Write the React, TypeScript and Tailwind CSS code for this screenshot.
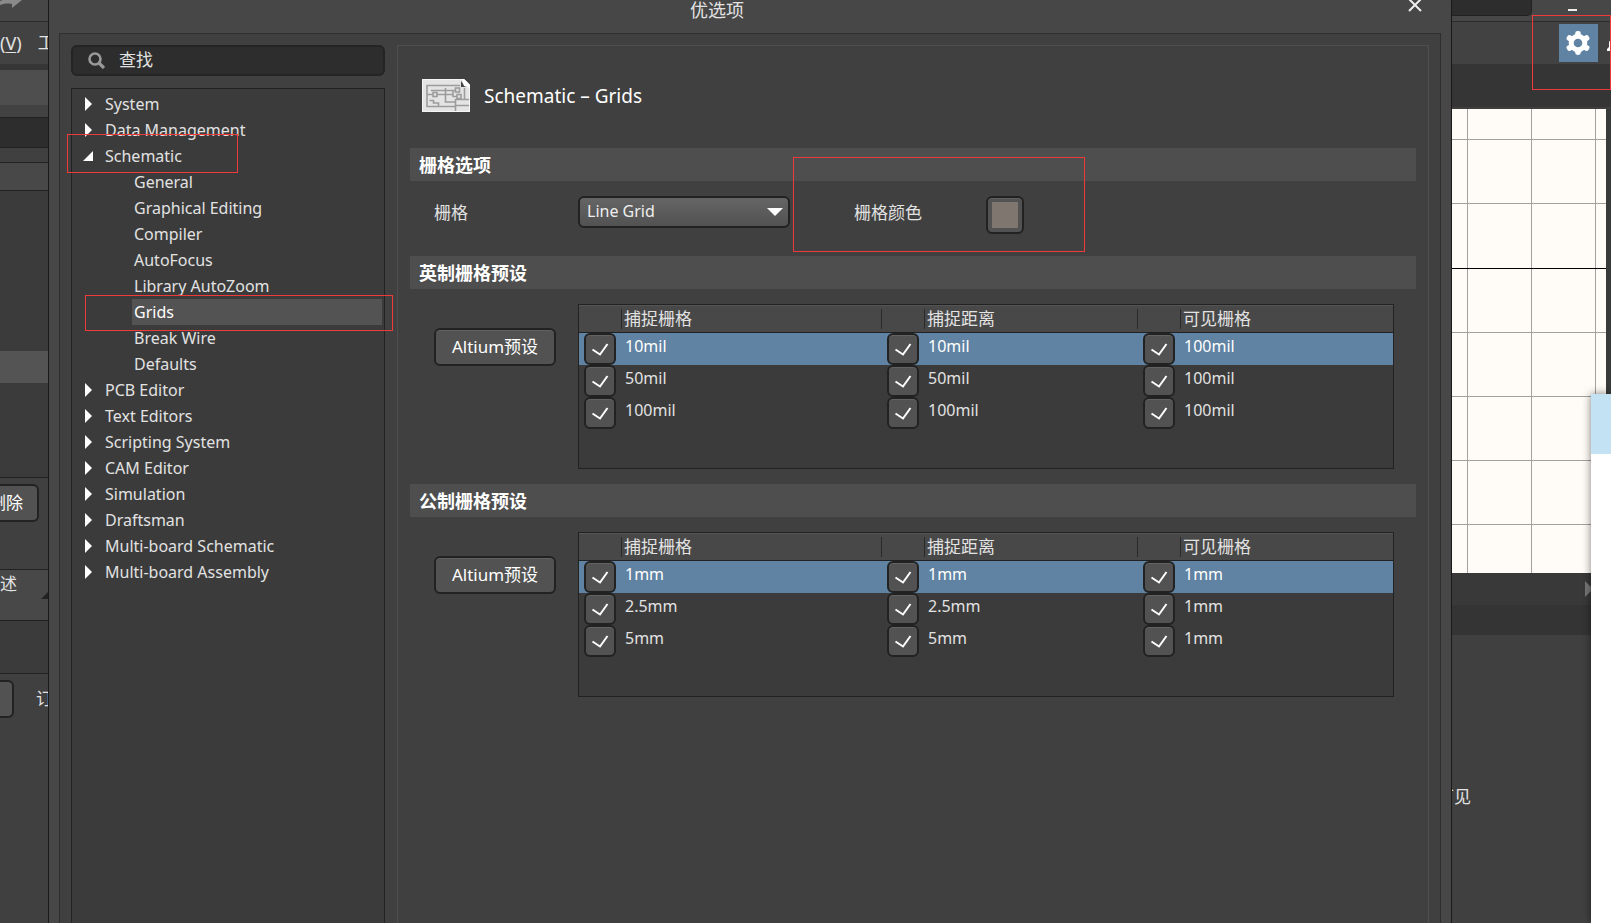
import type { ReactNode } from "react";

type TreeItem = { label: string; level: 0 | 1; open?: boolean; active?: boolean };

const tree: TreeItem[] = [
  { label: "System", level: 0 },
  { label: "Data Management", level: 0 },
  { label: "Schematic", level: 0, open: true },
  { label: "General", level: 1 },
  { label: "Graphical Editing", level: 1 },
  { label: "Compiler", level: 1 },
  { label: "AutoFocus", level: 1 },
  { label: "Library AutoZoom", level: 1 },
  { label: "Grids", level: 1, active: true },
  { label: "Break Wire", level: 1 },
  { label: "Defaults", level: 1 },
  { label: "PCB Editor", level: 0 },
  { label: "Text Editors", level: 0 },
  { label: "Scripting System", level: 0 },
  { label: "CAM Editor", level: 0 },
  { label: "Simulation", level: 0 },
  { label: "Draftsman", level: 0 },
  { label: "Multi-board Schematic", level: 0 },
  { label: "Multi-board Assembly", level: 0 },
];

const headers = ["捕捉栅格", "捕捉距离", "可见栅格"];
const imperial = [
  ["10mil", "10mil", "100mil"],
  ["50mil", "50mil", "100mil"],
  ["100mil", "100mil", "100mil"],
];
const metric = [
  ["1mm", "1mm", "1mm"],
  ["2.5mm", "2.5mm", "1mm"],
  ["5mm", "5mm", "1mm"],
];

function TreeRow({ item }: { item: TreeItem }) {
  if (item.level === 1) {
    return (
      <li className="flex h-[26px] pr-[2px] pl-[60px]">
        <button
          className={
            item.active
              ? "flex flex-1 items-center bg-[#535353] pl-[2px] text-left text-white"
              : "flex flex-1 items-center pl-[2px] text-left"
          }
        >
          {item.label}
        </button>
      </li>
    );
  }
  return (
    <li className="flex h-[26px]">
      <button className="flex flex-1 items-center pl-[11px] text-left" aria-expanded={!!item.open}>
        <svg className="mr-[11px] h-[14px] w-[11px]" viewBox="0 0 11 14" fill="#fff" aria-hidden="true">
          {item.open ? <path d="M0 12H10V2Z" /> : <path d="M2 0L9 7L2 14Z" />}
        </svg>
        {item.label}
      </button>
    </li>
  );
}

function SectionTitle({ children }: { children: ReactNode }) {
  return (
    <h2 className="flex h-[33px] items-center bg-[#4e4e4e] pl-[9px] text-[18px] font-bold text-white">{children}</h2>
  );
}

function Check({ label }: { label: string }) {
  return (
    <span className="relative block h-8 w-8">
      <input
        type="checkbox"
        defaultChecked
        aria-label={label}
        className="peer block h-8 w-8 appearance-none rounded-[6px] border-2 border-[#222] bg-[#525252] shadow-[inset_0_1px_0_#636363]"
      />
      <svg
        className="pointer-events-none invisible absolute inset-0 h-8 w-8 peer-checked:visible"
        viewBox="0 0 32 32"
        aria-hidden="true"
      >
        <path d="M8.500 16.500L16 21.500L23.500 11" fill="none" stroke="#fff" strokeWidth="2" />
      </svg>
    </span>
  );
}

function PresetTable({ rows }: { rows: string[][] }) {
  return (
    <div className="h-[165px] min-w-0 flex-1 border border-[#222] bg-[#3b3b3b]">
      <table className="w-full table-fixed border-separate border-spacing-0">
        <colgroup>
          <col className="w-[43px]" />
          <col className="w-[260px]" />
          <col className="w-[43px]" />
          <col className="w-[213px]" />
          <col className="w-[43px]" />
          <col />
        </colgroup>
        <thead>
          <tr className="h-7 bg-[#484848]">
            {headers.map((h, i) => [
              <td key={h + "c"} className="border-t border-b border-t-[#555] border-b-[#222] p-0">
                <div className="h-5 border-r border-[#2a2a2a]" />
              </td>,
              <th key={h} scope="col" className="border-t border-b border-t-[#555] border-b-[#222] p-0 text-left font-normal">
                <div
                  className={
                    i < 2 ? "flex h-5 items-center border-r border-[#2a2a2a] pl-[2px]" : "flex h-5 items-center pl-[2px]"
                  }
                >
                  {h}
                </div>
              </th>,
            ])}
          </tr>
        </thead>
        <tbody className="text-[16px]">
          {rows.map((row, r) => (
            <tr key={r} className={r === 0 ? "h-8 bg-[#6083a3] text-white" : "h-8"}>
              {row.map((v, c) => [
                <td key={c + "c"} className="p-0 pl-[5px]">
                  <Check label={headers[c] + " " + v} />
                </td>,
                <td key={c} className="p-0 pl-[3px] align-top leading-[26px]">
                  {v}
                </td>,
              ])}
            </tr>
          ))}
        </tbody>
      </table>
    </div>
  );
}

function Preset({ rows }: { rows: string[][] }) {
  return (
    <div className="flex items-start pt-[15px] pr-[22px] pb-[15px] pl-6">
      <button className="mt-6 mr-[22px] h-[38px] w-[122px] shrink-0 rounded-[6px] border-2 border-[#222] bg-[#525252] text-white shadow-[inset_0_1px_0_#606060]">
        Altium预设
      </button>
      <PresetTable rows={rows} />
    </div>
  );
}

function LeftStrip() {
  return (
    <aside className="flex w-12 shrink-0 flex-col overflow-hidden bg-[#404040]">
      <div className="h-[22px] shrink-0 border-b border-[#2c2c2c] bg-[#474747]">
        <svg className="h-2 w-6" viewBox="0 0 24 8" aria-hidden="true">
          <path d="M0 1C4-1 8-1 12-1H22V0L12 8V4C7 3 3 4 0 5Z" fill="#8a8a8a" />
        </svg>
      </div>
      <div className="flex h-[42px] shrink-0 items-center bg-[#424242] whitespace-nowrap">
        <span className="text-[18px]">
          (<span className="underline underline-offset-2">V</span>)
        </span>
        <span className="ml-4">工具</span>
      </div>
      <div className="h-[6px] shrink-0 bg-[#363636]" />
      <div className="h-[35px] shrink-0 bg-[#4e4e4e]" />
      <div className="h-3 shrink-0 bg-[#424242]" />
      <div className="h-[31px] shrink-0 border-y border-[#222] bg-[#2d2d2d]" />
      <div className="h-[14px] shrink-0" />
      <div className="h-[29px] shrink-0 border-y border-[#222] bg-[#484848]" />
      <div className="h-[160px] shrink-0 bg-[#3b3b3b]" />
      <div className="h-8 shrink-0 bg-[#545454]" />
      <div className="h-[94px] shrink-0 bg-[#3b3b3b]" />
      <div className="h-[92px] shrink-0 border-t border-[#222] pt-[6px]">
        <button className="flex h-[38px] w-[39px] items-center justify-end overflow-hidden rounded-r-[6px] border-2 border-l-0 border-[#222] bg-[#525252] pr-[14px] whitespace-nowrap text-white">
          删除
        </button>
      </div>
      <div className="flex h-[52px] shrink-0 items-start justify-between border-y border-[#222] bg-[#484848] pt-[2px]">
        <span>述</span>
        <svg className="mt-5 h-[7px] w-[7px]" viewBox="0 0 7 7" aria-hidden="true">
          <path d="M0 7H7V0Z" fill="#222" />
        </svg>
      </div>
      <div className="h-[53px] shrink-0 border-b border-[#222] bg-[#3b3b3b]" />
      <div className="flex shrink-0 items-center pt-[6px] whitespace-nowrap">
        <button
          aria-label="浏览"
          className="h-[38px] w-[14px] shrink-0 rounded-r-[6px] border-2 border-l-0 border-[#222] bg-[#525252]"
        />
        <span className="ml-[22px]">订单</span>
      </div>
    </aside>
  );
}

function SheetCanvas() {
  return (
    <div className="flex h-[464px] shrink-0 bg-[#373b39]">
      <svg className="h-full w-[154px]" viewBox="0 0 154 464" aria-hidden="true">
        <rect width="154" height="464" fill="#fffcf7" />
        <path
          d="M15.500 0V464M79.500 0V464M143.500 0V464M0 30.500H154M0 94.500H154M0 223.500H154M0 287.500H154M0 351.500H154M0 415.500H154"
          stroke="#a3a19d"
        />
        <path d="M0 159.500H154" stroke="#000" />
      </svg>
    </div>
  );
}

function RightStrip() {
  return (
    <aside className="relative flex w-[159px] shrink-0 flex-col overflow-hidden bg-[#404040]">
      <div className="flex h-[22px] shrink-0 border-b border-[#2c2c2c] bg-[#474747]">
        <div className="h-4 w-[80px] rounded-br-[5px] border-r border-b border-[#222] bg-[#2d2d2d]" />
        <button aria-label="最小化" className="ml-9 h-[11px] w-[9px] border-b-2 border-[#eee]" />
      </div>
      <div className="flex h-[42px] shrink-0 items-center bg-[#424242] pl-[107px]">
        <button aria-label="设置" className="flex h-[38px] w-[39px] shrink-0 items-center bg-[#6083a3] pl-[7px]">
          <svg className="h-6 w-6" viewBox="0 0 24 24" fill="#fff" aria-hidden="true">
            <circle cx="12" cy="12" r="9.300" />
            <rect x="9.200" y="0" width="5.600" height="24" rx="2.400" />
            <rect x="9.200" y="-0.500" width="5.600" height="25" rx="2" transform="rotate(60 12 12)" />
            <rect x="9.200" y="-0.500" width="5.600" height="25" rx="2" transform="rotate(120 12 12)" />
            <circle cx="12" cy="12" r="4.300" fill="#6083a3" />
          </svg>
        </button>
        <svg className="mt-1 ml-[9px] h-3 w-1 shrink-0" viewBox="0 0 4 12" aria-hidden="true">
          <path d="M4 0L2 3V8L0 10V12H4Z" fill="#fff" />
        </svg>
      </div>
      <div className="h-[45px] shrink-0 border-b-2 border-[#3f3f3f] bg-[#353535]" />
      <SheetCanvas />
      <div className="flex h-8 shrink-0 items-center bg-[#393939] pl-[133px]">
        <svg className="h-4 w-2" viewBox="0 0 8 16" aria-hidden="true">
          <path d="M0 0L8 8L0 16Z" fill="#777" />
        </svg>
      </div>
      <div className="h-[30px] shrink-0 bg-[#343434]" />
      <div className="mt-[150px] flex w-[19px] justify-end whitespace-nowrap">可见</div>
      <div className="absolute top-[394px] right-0 bottom-0 w-5 bg-white shadow-[0_0_8px_rgba(0,0,0,0.5)]">
        <div className="h-[60px] bg-[#c3e3f4]" />
      </div>
    </aside>
  );
}

function SheetIcon() {
  return (
    <svg className="h-[33px] w-12" viewBox="0 0 48 33" aria-hidden="true">
      <path d="M0 0H42L48 6V33H0Z" fill="#e4e4e4" />
      <path d="M.5.5H42L47.500 6V32.500H.5Z" fill="none" stroke="#f4f4f4" />
      <g fill="none" stroke="#9c9c9c" strokeWidth="1.600">
        <path d="M38 6.500H5V27.500H33.500M9 11.500H33M5 15.500H11M15 15.500H31M23.500 9V23H33.500M7.500 21.500H11.500V24H16.500V27.500M31 11.500V17.500H35M42.500 9V20" />
        <rect x="11" y="13.500" width="4" height="4" />
        <rect x="33.500" y="9" width="4" height="4" />
        <rect x="35" y="15.500" width="4" height="4" />
        <path d="M33.500 20.500H47M33.500 26.500H47M33.500 20V32" />
      </g>
      <path d="M39 2V8H46L42 6Z" fill="#444" />
      <path d="M40 0H42L48 6V9L42 7Z" fill="#fff" />
    </svg>
  );
}

export default function App() {
  return (
    <div className="relative flex h-screen overflow-hidden bg-[#404040] font-['Noto_Sans','Noto_Sans_CJK_SC',sans-serif] text-[17px] leading-6 text-[#e2e2e2]">
      <LeftStrip />
      <main className="flex min-w-0 flex-1 flex-col border-x border-[#1a1a1a] bg-[#474747]">
        <header className="relative flex h-[33px] shrink-0 items-start justify-center">
          <h1 className="-mt-[2px] pr-[66px] text-[18px]">优选项</h1>
          <button aria-label="关闭" className="absolute top-[-2px] right-[29px]">
            <svg className="h-[14px] w-[14px]" viewBox="0 0 14 14" aria-hidden="true">
              <path d="M1 1L13 13M13 1L1 13" stroke="#eee" strokeWidth="2" />
            </svg>
          </button>
        </header>
        <div className="mx-[10px] flex min-h-0 flex-1 border border-b-0 border-[#2e2e2e] bg-[#404040] px-[11px] pt-[11px]">
          <div className="mr-3 flex w-[314px] shrink-0 flex-col">
            <label className="flex h-[31px] shrink-0 items-center rounded-[6px] border-2 border-[#242424] bg-[#2d2d2d] pl-[15px]">
              <svg className="h-[17px] w-[17px]" viewBox="0 0 17 17" fill="none" aria-hidden="true">
                <circle cx="7" cy="7" r="5.500" stroke="#999" strokeWidth="2.600" />
                <path d="M11 11L16 16" stroke="#999" strokeWidth="3.200" />
              </svg>
              <input
                type="text"
                aria-label="查找"
                placeholder="查找"
                className="ml-[14px] min-w-0 flex-1 bg-transparent pb-[2px] outline-none placeholder:text-[#e2e2e2]"
              />
            </label>
            <ul className="mt-3 flex-1 border border-b-0 border-[#222] bg-[#3b3b3b] pt-[2px] text-[16px]">
              {tree.map((item) => (
                <TreeRow key={item.label} item={item} />
              ))}
            </ul>
          </div>
          <section className="min-w-0 flex-1 border border-b-0 border-[#4e4e4e] px-3">
            <div className="flex h-[102px] items-center pb-[3px] pl-3">
              <SheetIcon />
              <span className="ml-[14px] text-[19px] text-white">Schematic – Grids</span>
            </div>
            <SectionTitle>栅格选项</SectionTitle>
            <div className="flex h-[75px] items-start pt-[15px] pl-6">
              <label htmlFor="grid-kind" className="mt-[5px] w-[144px]">
                栅格
              </label>
              <div className="relative">
                <select
                  id="grid-kind"
                  className="h-8 w-[212px] appearance-none rounded-[6px] border-2 border-[#222] bg-linear-to-b from-[#656565] to-[#525252] pb-[2px] pl-[7px] text-[16px] text-[#eee]"
                >
                  <option>Line Grid</option>
                </select>
                <svg
                  className="pointer-events-none absolute top-3 right-[7px] h-2 w-4"
                  viewBox="0 0 16 8"
                  aria-hidden="true"
                >
                  <path d="M0 0H16L8 8Z" fill="#fff" />
                </svg>
              </div>
              <label htmlFor="grid-color" className="mt-[5px] ml-16 w-[132px]">
                栅格颜色
              </label>
              <button
                id="grid-color"
                className="flex h-[38px] w-[38px] items-center justify-center rounded-[6px] border-2 border-[#222] bg-[#525252] shadow-[inset_0_1px_0_#606060]"
              >
                <span className="h-[26px] w-[26px] bg-[#807670]" />
              </button>
            </div>
            <SectionTitle>英制栅格预设</SectionTitle>
            <Preset rows={imperial} />
            <SectionTitle>公制栅格预设</SectionTitle>
            <Preset rows={metric} />
          </section>
        </div>
      </main>
      <RightStrip />
      <div className="pointer-events-none absolute top-[134px] left-[67px] h-[39px] w-[171px] border border-[#f03a3a]" />
      <div className="pointer-events-none absolute top-[295px] left-[85px] h-9 w-[308px] border border-[#f03a3a]" />
      <div className="pointer-events-none absolute top-[157px] left-[793px] h-[95px] w-[292px] border border-[#f03a3a]" />
      <div className="pointer-events-none absolute top-[15px] right-0 h-[75px] w-[79px] border border-[#f03a3a]" />
    </div>
  );
}
